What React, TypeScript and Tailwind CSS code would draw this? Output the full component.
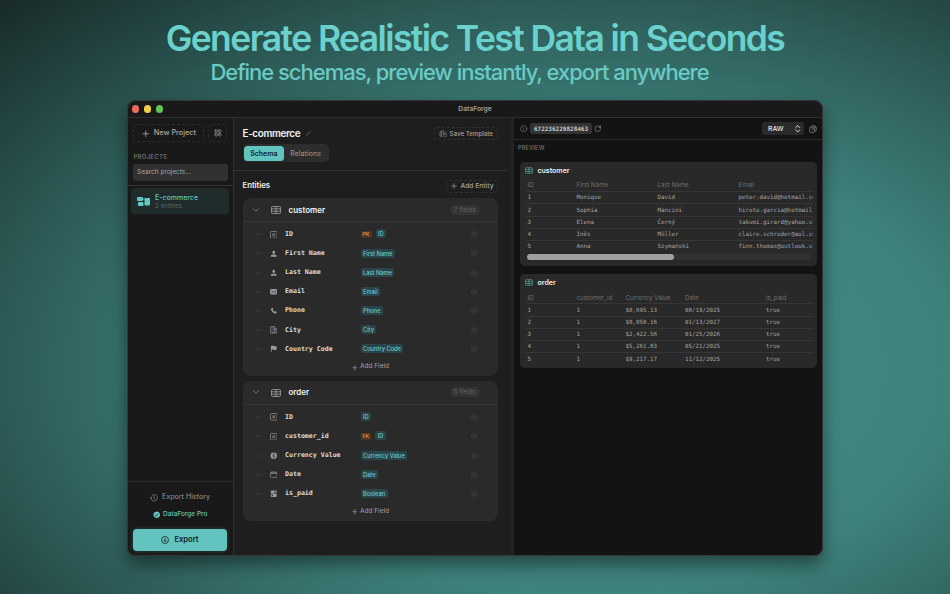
import React, { useState } from 'react';
import { ChevronDown, ChevronsUpDown, Info, LayoutGrid, Plus, RotateCw } from 'lucide-react';

type IconName = 'number' | 'person' | 'mail' | 'phone' | 'building' | 'flag' | 'dollar' | 'calendar' | 'switch';

interface Field {
    name: string;
    icon: IconName;
    type: string;
    keyLabel?: 'PK' | 'FK';
}

interface Entity {
    name: string;
    fields: Field[];
}

interface PreviewTable {
    name: string;
    headers: string[];
    rows: string[][];
    columns: string;
    scrollable?: boolean;
}

const ENTITIES: Entity[] = [
    {
        name: 'customer',
        fields: [
            { name: 'ID', icon: 'number', type: 'ID', keyLabel: 'PK' },
            { name: 'First Name', icon: 'person', type: 'First Name' },
            { name: 'Last Name', icon: 'person', type: 'Last Name' },
            { name: 'Email', icon: 'mail', type: 'Email' },
            { name: 'Phone', icon: 'phone', type: 'Phone' },
            { name: 'City', icon: 'building', type: 'City' },
            { name: 'Country Code', icon: 'flag', type: 'Country Code' },
        ],
    },
    {
        name: 'order',
        fields: [
            { name: 'ID', icon: 'number', type: 'ID' },
            { name: 'customer_id', icon: 'number', type: 'ID', keyLabel: 'FK' },
            { name: 'Currency Value', icon: 'dollar', type: 'Currency Value' },
            { name: 'Date', icon: 'calendar', type: 'Date' },
            { name: 'is_paid', icon: 'switch', type: 'Boolean' },
        ],
    },
];

const TABLES: PreviewTable[] = [
    {
        name: 'customer',
        headers: ['ID', 'First Name', 'Last Name', 'Email'],
        columns: 'grid-cols-[49px_81px_81px_120px]',
        scrollable: true,
        rows: [
            ['1', 'Monique', 'David', 'peter.david@hotmail.com'],
            ['2', 'Sophia', 'Mancini', 'hiroto.garcia@hotmail.com'],
            ['3', 'Elena', 'Černý', 'takumi.girard@yahoo.com'],
            ['4', 'Inês', 'Müller', 'claire.schroder@aol.com'],
            ['5', 'Anna', 'Szymański', 'finn.thomas@outlook.com'],
        ],
    },
    {
        name: 'order',
        headers: ['ID', 'customer_id', 'Currency Value', 'Date', 'is_paid'],
        columns: 'grid-cols-[49px_49px_59.5px_81px_46px]',
        rows: [
            ['1', '1', '$8,695.13', '08/19/2025', 'true'],
            ['2', '1', '$8,050.16', '01/13/2027', 'true'],
            ['3', '1', '$2,422.56', '01/25/2026', 'true'],
            ['4', '1', '$5,261.83', '05/21/2025', 'true'],
            ['5', '1', '$9,217.17', '11/12/2025', 'true'],
        ],
    },
];

const FieldIcon: React.FC<{ name: IconName }> = ({ name }) => {
    const shapes: Record<IconName, React.ReactNode> = {
        number: (
            <g fill="none" stroke="currentColor">
                <rect x="1" y="1" width="14" height="14" rx="2" strokeWidth="1.4" />
                <path d="M7.200 4.500 6 11.500M10.200 4.500 9 11.500M4.800 6.600h6.600M4.500 9.400h6.600" strokeWidth="0.900" />
            </g>
        ),
        person: (
            <path d="M8 1.500a3 3 0 0 1 2.800 3.200C10.800 6.600 9.600 8.300 8 8.300S5.200 6.600 5.200 4.700A3 3 0 0 1 8 1.500ZM1.500 13.300c0-2.400 2.700-3.900 6.500-3.900s6.500 1.500 6.500 3.900c0 .6-.4.900-1 .9h-11c-.6 0-1-.3-1-.9Z" fill="currentColor" />
        ),
        mail: (
            <g>
                <rect x="0" y="2" width="16" height="12" rx="2.200" fill="currentColor" />
                <path d="m1.500 4 6.500 5.300L14.500 4M1.500 12.500 5.800 8.200M14.500 12.500l-4.300-4.300" fill="none" stroke="#2a2a2a" strokeWidth="1.200" />
            </g>
        ),
        phone: (
            <path d="M4.400 1.800 2.600 3.300c-1.200 1.500 0 4.700 2.800 7.500s6 4.100 7.600 2.700l1.400-1.600c.4-.5.300-1-.2-1.400l-2.300-1.600c-.5-.3-1-.3-1.400.1l-1 .9C8.300 9.500 6.300 7.500 5.900 6.500l.9-1.100c.3-.4.300-.9 0-1.300L5.700 2.100c-.3-.5-.9-.6-1.300-.3Z" fill="currentColor" />
        ),
        building: (
            <g>
                <path d="M1.500 15V1.800c0-.5.400-.8.900-.8h6.200c.5 0 .9.300.9.800V5h4c.6 0 1 .3 1 .8V15Z" fill="none" stroke="currentColor" strokeWidth="1.500" />
                <path d="M4 4h1.300M6.600 4H8M4 7h1.300M6.600 7H8M4 10h1.300M6.600 10H8M11.200 8h1.500M11.200 11h1.500M5.500 15v-2.500" stroke="currentColor" strokeWidth="1.600" />
                <path d="M9.500 5v10" stroke="currentColor" strokeWidth="1.400" />
            </g>
        ),
        flag: (
            <path d="M2 1.500h1.300v.7c2.200-1 4-.6 5.600.1 1.500.6 3 .8 5.100 0V10c-2 .9-3.700.7-5.300 0-1.600-.6-3.200-.8-5.400.1V15H2Z" fill="currentColor" />
        ),
        dollar: (
            <g>
                <circle cx="8" cy="8" r="6.800" fill="currentColor" />
                <path d="M10.500 5.800C10 4.800 9.200 4.500 8 4.500c-1.400 0-2.400.7-2.400 1.700C5.600 8.700 10.500 7.300 10.500 9.800c0 1.100-1.100 1.800-2.500 1.800-1.300 0-2.300-.6-2.600-1.600M8 3v10" fill="none" stroke="#2a2a2a" strokeWidth="1.200" />
            </g>
        ),
        calendar: (
            <g>
                <rect x="1" y="2" width="14" height="12" rx="2" fill="none" stroke="currentColor" strokeWidth="1.300" />
                <path d="M1.500 4.400h13" stroke="currentColor" strokeWidth="2.400" />
            </g>
        ),
        switch: (
            <g>
                <rect x="1.500" y="1" width="13" height="6.300" rx="2.500" fill="currentColor" />
                <circle cx="10.800" cy="4.200" r="1.700" fill="#2a2a2a" />
                <rect x="1.500" y="8.700" width="13" height="6.300" rx="2.500" fill="currentColor" />
                <circle cx="5" cy="11.800" r="1.700" fill="#2a2a2a" />
            </g>
        ),
    };

    return (
        <svg viewBox="0 0 16 16" className="size-[7.500px] shrink-0 text-[#9b9b9b]">
            {shapes[name]}
        </svg>
    );
};

const TableIcon: React.FC<{ className: string }> = ({ className }) => (
    <svg viewBox="0 0 10 8" fill="none" stroke="currentColor" strokeWidth="0.800" className={className}>
        <rect x="0.500" y="0.500" width="9" height="7" rx="1.100" />
        <path d="M.5 2.800h9M.5 5.200h9M5 .5v7" />
    </svg>
);

const EntityCard: React.FC<{ entity: Entity }> = ({ entity }) => (
    <section className="rounded-[8px] bg-[#2a2a2a]">
        <header className="flex h-[24px] items-center border-b border-[#373737] pl-[8.500px] pr-[18px]">
            <ChevronDown className="size-[10px] text-[#858585]" strokeWidth={2} />
            <TableIcon className="mt-px ml-[10px] h-[8px] w-[10px] text-[#a2a2a2]" />
            <h3 className="ml-[7.500px] text-[8px] font-semibold text-[#f1f1f1]">{entity.name}</h3>
            <span className="ml-auto rounded-full bg-[#343434] px-[3.500px] pt-px text-[6.500px] leading-[9px] text-[#626262]">
                {entity.fields.length} fields
            </span>
        </header>
        <div className="pt-[2.700px]">
            {entity.fields.map((field, index) => (
                <div key={index} className="flex h-[19.150px] items-center pl-[13.500px] pr-[20.500px]">
                    <svg viewBox="0 0 10 4" className="h-[2px] w-[5px] text-[#404040]">
                        <path d="M0 .7h10M0 3.300h10" stroke="currentColor" />
                    </svg>
                    <div className="ml-[8.500px] flex w-[15.500px]">
                        <FieldIcon name={field.icon} />
                    </div>
                    <span className="w-[75.500px] pt-[1px] whitespace-nowrap font-['DejaVu_Sans_Mono',monospace] text-[6.600px] font-semibold text-[#dcdcdc]">
                        {field.name}
                    </span>
                    {field.keyLabel && (
                        <span className="mr-[4px] mb-[0.500px] rounded-[1.500px] bg-[#4d3521] px-[2px] text-[5.200px] leading-[7px] font-semibold text-[#e38a3c]">
                            {field.keyLabel}
                        </span>
                    )}
                    <span className="mb-[0.800px] rounded-[2px] bg-[#29444a] px-[2.500px] text-[5.700px] leading-[9px] font-medium text-[#6ccbc9]">
                        {field.type}
                    </span>
                    <svg viewBox="0 0 12 12" fill="none" stroke="currentColor" className="ml-auto size-[6px] text-[#484848]">
                        <circle cx="6" cy="6" r="5" strokeWidth="1.200" />
                        <path d="M3 6h6" strokeWidth="1.800" />
                    </svg>
                </div>
            ))}
        </div>
        <button className="flex h-[17.300px] w-full items-center justify-center gap-[1.500px] text-[6.500px] text-[#a2a2a2]">
            <Plus className="size-[7.500px]" />
            Add Field
        </button>
    </section>
);

const PreviewCard: React.FC<{ table: PreviewTable }> = ({ table }) => (
    <section className="rounded-[5px] bg-[#292929] px-[4.500px] pb-[3.500px]">
        <div className="flex h-[17px] items-center">
            <TableIcon className="ml-[0.500px] h-[7px] w-[8px] text-[#58aca6]" />
            <h3 className="ml-[4.500px] pt-[0.800px] text-[7px] font-semibold text-[#f0f0f0]">{table.name}</h3>
        </div>
        <div className="overflow-hidden">
            <div className={`grid h-[12px] w-max min-w-full items-center pl-[3px] text-[6.200px] text-[#707070] ${table.columns}`}>
                {table.headers.map(header => (
                    <span key={header}>{header}</span>
                ))}
            </div>
            {table.rows.map(row => (
                <div
                    key={row[0]}
                    className={`grid h-[12.250px] w-max min-w-full items-center border-t border-[#363636] pl-[3px] font-['DejaVu_Sans_Mono',monospace] text-[5.830px] text-[#a5a5a5] ${table.columns}`}
                >
                    {row.map((cell, i) => (
                        <span key={i} className="whitespace-nowrap">{cell}</span>
                    ))}
                </div>
            ))}
        </div>
        {table.scrollable && (
            <div className="mx-[2px] mt-[1.500px] mb-[2.500px] h-[6px] rounded-full bg-[#313131]">
                <div className="h-full w-[147px] rounded-full bg-[#a0a0a0]" />
            </div>
        )}
    </section>
);

const Sidebar: React.FC = () => (
    <aside className="flex w-[107px] shrink-0 flex-col border-r border-[#303030] bg-[#191919]">
        <div className="flex gap-[4px] px-[6px] pt-[6px]">
            <button className="flex h-[18px] w-[72px] items-center justify-center gap-[3px] rounded-[4px] border border-dashed border-[#2c2c2c] pt-[1px] text-[7.300px] font-medium text-[#a8a8a8]">
                <Plus className="size-[9.500px]" />
                New Project
            </button>
            <button className="flex h-[18px] w-[19px] items-center justify-center rounded-[4px] border border-dashed border-[#2c2c2c] text-[#a0a0a0]">
                <LayoutGrid className="size-[8px]" />
            </button>
        </div>
        <h2 className="mt-[10.500px] ml-[6.500px] text-[6.100px] leading-[8px] font-medium tracking-[0.200px] text-[#777]">PROJECTS</h2>
        <div className="mx-[5.500px] mt-[3.500px] flex h-[17px] items-center rounded-[3px] bg-[#313131] pt-[1.500px] pl-[4.500px] text-[6.500px] text-[#a5a5a5]">
            Search projects...
        </div>
        <div className="mt-[4px] h-px bg-[#343434]" />
        <div className="mx-[4px] mt-[2px] flex h-[26px] items-center gap-[5px] rounded-[4px] border border-[#222f2f] bg-[#202b2b] pl-[5px]">
            <svg viewBox="0 0 26 18" className="h-[9px] w-[13px] text-[#63c8c3]" fill="currentColor">
                <rect x="0" y="0" width="12" height="8" rx="2" />
                <rect x="2" y="10" width="11" height="8" rx="2" />
                <rect x="15" y="2" width="11" height="15" rx="2" />
                <path d="M11 3h4v2h-4z" />
            </svg>
            <div>
                <div className="text-[7px] leading-[9px] font-medium text-[#63c3bf]">E-commerce</div>
                <div className="text-[6.200px] leading-[8px] text-[#5c6565]">2 entities</div>
            </div>
        </div>
        <div className="mt-auto flex h-[75px] flex-col items-center border-t border-[#2f2f2f] pt-[10px]">
            <button className="flex h-[11px] items-center gap-[4px] text-[7.100px] text-[#989898]">
                <svg viewBox="0 0 16 16" fill="none" stroke="currentColor" strokeWidth="1.200" strokeLinecap="round" strokeLinejoin="round" className="size-[8px]">
                    <path d="M1.900 8A6.500 6.500 0 1 0 4.200 2.700M1.900 8 .5 6.200M1.900 8l1.700-1.500M8 4.500V8l2.300 2.400" />
                </svg>
                Export History
            </button>
            <button className="mt-[6px] flex h-[11px] items-center gap-[3px] text-[6.500px] font-medium text-[#65c6c1]">
                <svg viewBox="0 0 16 16" className="size-[7.500px]">
                    <path d="m8 .5 2 1.600 2.500-.1.700 2.500 2.100 1.400L14.500 8l.8 2.300-2.100 1.300-.7 2.500-2.500-.1-2 1.500-2-1.500-2.500.1-.7-2.500L.7 10.300 1.500 8l-.8-2.100 2.100-1.400L3.500 2l2.500.1Z" fill="currentColor" />
                    <path d="m5 8.300 2.200 2.400L11 5.500" fill="none" stroke="#191919" strokeWidth="1.600" />
                </svg>
                DataForge Pro
            </button>
            <button className="mt-[8.500px] flex h-[22px] w-[94px] shrink-0 items-center justify-center gap-[5px] rounded-[4px] bg-[#63c4bf] pt-px text-[7.600px] font-semibold text-[#10201f] shadow-[0_0_4px_rgba(99,196,191,0.300)]">
                <svg viewBox="0 0 16 16" fill="none" stroke="currentColor" strokeWidth="1.500" className="size-[8px]">
                    <circle cx="8" cy="8" r="7" />
                    <path d="M8 4v7M5.300 8.500 8 11.300l2.700-2.800" />
                </svg>
                Export
            </button>
        </div>
    </aside>
);

const SchemaEditor: React.FC = () => {
    const [tab, setTab] = useState('Schema');

    return (
        <main className="flex w-[277px] shrink-0 flex-col bg-[#1e1e1e]">
            <div className="mr-[4px] h-[53px] border-b border-[#323232] pt-[8px] pr-[9px] pl-[8.500px]">
                <div className="flex h-[15px] items-center">
                    <h1 className="text-[9.900px] font-semibold tracking-[-0.350px] text-[#f4f4f4]">E-commerce</h1>
                    <svg viewBox="0 0 10 10" className="ml-[6px] size-[5px] text-[#777]">
                        <path d="M.8 9.200 9 1" stroke="currentColor" strokeWidth="1.600" />
                    </svg>
                    <button className="ml-auto flex h-[13px] items-center gap-[3px] rounded-[3px] border border-dashed border-[#303030] px-[4px] text-[6.200px] font-medium text-[#a2a2a2]">
                        <svg viewBox="0 0 16 16" fill="none" stroke="currentColor" strokeWidth="1.200" className="size-[7.500px]">
                            <path d="M5.500 4H3.500C2.500 4 2 4.600 2 5.500v6c0 1 .6 1.500 1.500 1.500H5M8 5H6.500C5.600 5 5 5.600 5 6.500v7c0 .9.600 1.500 1.500 1.500h7c.9 0 1.500-.6 1.500-1.500v-7c0-.9-.6-1.500-1.500-1.500H12M10 1v10M7.500 8.500 10 11l2.500-2.500M2 4l6-3" />
                        </svg>
                        Save Template
                    </button>
                </div>
                <div className="mt-[3px] flex h-[18px] w-[86.500px] rounded-[5px] bg-[#2d2d2d] p-[1.500px]">
                    {['Schema', 'Relations'].map(name => (
                        <button
                            key={name}
                            onClick={() => setTab(name)}
                            className={`flex items-center justify-center rounded-[3.500px] pt-[1.500px] text-[7px] ${tab === name ? 'w-[40px] bg-[#62c4bf] font-semibold text-[#102827]' : 'w-[44px] font-medium text-[#8b8b8b]'}`}
                        >
                            {name}
                        </button>
                    ))}
                </div>
            </div>
            <div className="flex h-[27px] items-center justify-between pt-[3px] pr-[13.500px] pl-[8.500px]">
                <h2 className="text-[7.800px] font-semibold tracking-[-0.050px] text-[#f0f0f0]">Entities</h2>
                <button className="flex h-[13px] items-center gap-[2px] rounded-[3px] border border-dashed border-[#303030] px-[3px] text-[6.700px] font-medium text-[#a5a5a5]">
                    <Plus className="size-[8px]" />
                    Add Entity
                </button>
            </div>
            <div className="flex flex-col gap-[5px] pr-[13.500px] pl-[8.500px]">
                {ENTITIES.map(entity => (
                    <EntityCard key={entity.name} entity={entity} />
                ))}
            </div>
        </main>
    );
};

const PreviewPanel: React.FC = () => (
    <aside className="min-w-0 flex-1 border-l-[3px] border-[#232323] bg-[#131313]">
        <div className="flex h-[22px] items-center border-b border-[#2b2b2b] pr-[6px] pl-[6px]">
            <Info className="size-[7.500px] text-[#777]" />
            <span className="ml-[2.500px] flex h-[11px] w-[62px] items-center justify-center rounded-[2px] bg-[#333] font-['DejaVu_Sans_Mono',monospace] text-[6px] font-semibold text-[#cacaca]">
                672236229828463
            </span>
            <RotateCw className="ml-[1.500px] size-[7.500px] text-[#909090]" />
            <button className="ml-auto flex h-[12.500px] w-[42px] items-center justify-between rounded-[3px] bg-[#2a2a2a] pt-[0.800px] pr-[2px] pl-[6px] text-[6.800px] font-medium text-[#e5e5e5]">
                RAW
                <ChevronsUpDown className="size-[9.500px]" strokeWidth={2.500} />
            </button>
            <svg viewBox="0 0 16 16" fill="none" stroke="currentColor" strokeWidth="1.300" className="ml-[5px] size-[8px] text-[#999]">
                <path d="M6 3.500V3c0-1 .6-1.700 1.600-1.700h3.200l3.700 3.700v5.300c0 1-.6 1.700-1.600 1.700h-1.400" />
                <path d="M10.600 1.500v2.700c0 .6.400 1 1 1h2.700" />
                <path d="M3.200 3.800h3.300l4.500 4.400v4.900c0 1-.6 1.700-1.600 1.700H3.200c-1 0-1.700-.7-1.700-1.700V5.500c0-1 .7-1.700 1.700-1.700Z" />
                <path d="M6.500 4v3.300c0 .6.400 1 1 1H11" />
            </svg>
        </div>
        <h2 className="mt-[4px] ml-[4px] text-[5.600px] leading-[8px] font-medium tracking-[0.200px] text-[#777]">PREVIEW</h2>
        <div className="mt-[10px] flex flex-col gap-[8.500px] pr-[6px] pl-[6px]">
            {TABLES.map(table => (
                <PreviewCard key={table.name} table={table} />
            ))}
        </div>
    </aside>
);

export default function App() {
    return (
        <div className="flex h-[594px] w-[950px] flex-col items-center overflow-hidden bg-[radial-gradient(ellipse_at_62%_62%,#468f89_0%,#3f827c_43%,#2d5b57_70%,#182a28_100%)] font-[Inter,sans-serif]">
            <h1 className="mt-[14px] h-[48px] text-[35.500px] leading-[49px] font-semibold tracking-[-1.600px] whitespace-nowrap text-[#6ad1cc]">
                Generate Realistic Test Data in Seconds
            </h1>
            <p className="mr-[31px] h-[38px] text-[22px] leading-[20px] font-medium tracking-[-1.020px] whitespace-nowrap text-[#68cbc6]">
                Define schemas, preview instantly, export anywhere
            </p>
            <div className="flex h-[456px] w-[696px] flex-col overflow-hidden rounded-[9px] bg-[#191919] shadow-[0_9px_18px_rgba(0,0,0,0.450)] outline-1 -outline-offset-1 outline-[#353535]">
                <div className="relative flex h-[18px] shrink-0 items-center justify-center border-b border-[#2e2e2e] pt-px text-[6.700px] font-semibold text-[#a0a0a0]">
                    <div className="absolute left-[4.500px] flex gap-[5px]">
                        <span className="size-[7.200px] rounded-full bg-[#ed6a5e]" />
                        <span className="size-[7.200px] rounded-full bg-[#f4ce4b]" />
                        <span className="size-[7.200px] rounded-full bg-[#61c454]" />
                    </div>
                    DataForge
                </div>
                <div className="flex min-h-0 flex-1">
                    <Sidebar />
                    <SchemaEditor />
                    <PreviewPanel />
                </div>
            </div>
        </div>
    );
}
